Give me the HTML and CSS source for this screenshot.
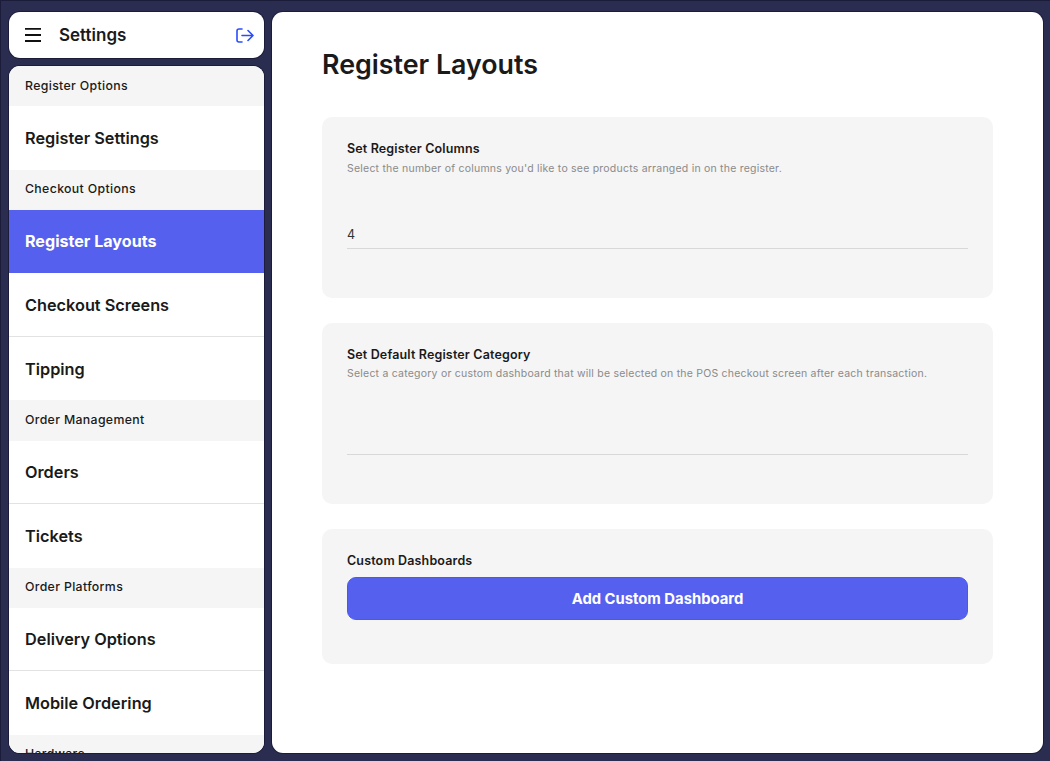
FILE: index.html
```html
<!DOCTYPE html>
<html lang="en">
<head>
<meta charset="utf-8">
<title>Settings</title>
<link rel="stylesheet" href="styles.css">
</head>
<body>
<div class="app">
  <aside class="sidebar">
    <header class="side-head">
      <svg class="menu-icon" width="18" height="16" viewBox="0 0 18 16" aria-hidden="true"><path d="M1 1.800h16M1 8h16M1 14h16" fill="none" stroke="#111" stroke-width="1.800"/></svg>
      <span class="side-title">Settings</span>
      <svg class="exit-icon" width="18" height="15" viewBox="0 0 18 15" aria-hidden="true"><path d="M6 1H3a2 2 0 0 0-2 2v9a2 2 0 0 0 2 2h3M6 7.500h11M12 2.500l5 5-5 5" fill="none" stroke="#2a4cff" stroke-width="1.600" stroke-linecap="round" stroke-linejoin="round"/></svg>
    </header>
    <nav class="menu">
      <div class="group">Register Options</div>
      <a class="item plain">Register Settings</a>
      <div class="group">Checkout Options</div>
      <a class="item plain active">Register Layouts</a>
      <a class="item">Checkout Screens</a>
      <a class="item plain">Tipping</a>
      <div class="group">Order Management</div>
      <a class="item">Orders</a>
      <a class="item plain">Tickets</a>
      <div class="group">Order Platforms</div>
      <a class="item">Delivery Options</a>
      <a class="item plain">Mobile Ordering</a>
      <div class="group">Hardware</div>
    </nav>
  </aside>
  <main class="content">
    <h1 class="page-title">Register Layouts</h1>
    <section class="card">
      <h2 class="card-title">Set Register Columns</h2>
      <p class="card-desc">Select the number of columns you'd like to see products arranged in on the register.</p>
      <div class="field">4</div>
    </section>
    <section class="card">
      <h2 class="card-title">Set Default Register Category</h2>
      <p class="card-desc">Select a category or custom dashboard that will be selected on the POS checkout screen after each transaction.</p>
      <div class="field"></div>
    </section>
    <section class="card card-last">
      <h2 class="card-title">Custom Dashboards</h2>
      <button class="add-btn" type="button">Add Custom Dashboard</button>
    </section>
  </main>
</div>
</body>
</html>
```
FILE: styles.css
```css
* { box-sizing: border-box; }
html, body { height: 100%; }
body {
  margin: 0;
  background: #2b2d50;
  font-family: Inter, "Liberation Sans", sans-serif;
  color: #1a1a1a;
  overflow: hidden;
}
.app {
  display: flex;
  gap: 8px;
  height: 761px;
  padding: 12px 7px 8px 9px;
  box-shadow: inset 1px 1px 0 #1b1c3a;
}
.sidebar {
  width: 255px;
  flex: none;
  display: flex;
  flex-direction: column;
  gap: 8px;
}
.side-head {
  height: 46px;
  flex: none;
  display: flex;
  align-items: center;
  background: #fff;
  border-radius: 11px;
  box-shadow: 0 0 0 1px #1b1c3a;
  padding: 0 10px 0 15px;
}
.menu-icon { flex: none; }
.side-title {
  margin-left: 17px;
  font-size: 17px;
  font-weight: 600;
  flex: 1;
}
.menu {
  flex: 1;
  min-height: 0;
  overflow: hidden;
  background: #fff;
  border-radius: 11px;
  box-shadow: 0 0 0 1px #1b1c3a;
}
.group {
  height: 40.200px;
  display: flex;
  align-items: center;
  padding: 0 0 2px 16px;
  background: #f5f5f5;
  font-size: 12.300px;
  font-weight: 500;
  letter-spacing: 0.35px;
}
.item {
  display: flex;
  align-items: center;
  height: 63.500px;
  padding-left: 16px;
  font-size: 16.300px;
  font-weight: 600;
  border-bottom: 1px solid #e2e2e2;
}
.item.plain { border-bottom: 0; }
.item.active {
  padding-bottom: 2px;
  background: #5561ee;
  color: #fff;
  font-weight: 700;
  font-size: 16.100px;
}
.content {
  flex: 1;
  min-width: 0;
  background: #fff;
  border-radius: 11px;
  box-shadow: 0 0 0 1px #1b1c3a;
  padding: 0 50px;
}
.page-title {
  margin: 34px 0 35px;
  font-size: 26.800px;
  line-height: 36px;
  font-weight: 600;
}
.card {
  width: 671px;
  height: 181px;
  margin-bottom: 25px;
  padding: 24px 25px 0;
  background: #f5f5f5;
  border-radius: 10px;
}
.card-last { height: 135px; }
.card-title {
  margin: 0;
  font-size: 12.500px;
  line-height: 15px;
  font-weight: 600;
  letter-spacing: 0.15px;
}
.card-desc {
  margin: 5px 0 0;
  font-size: 10.500px;
  line-height: 14px;
  letter-spacing: 0.22px;
  color: #8a8a8a;
}
.card:first-of-type .card-desc { line-height: 15px; }
.card:first-of-type .field { margin-top: 38px; }
.field {
  height: 35px;
  margin-top: 39px;
  padding-top: 13px;
  border-bottom: 1px solid #d8d8d8;
  font-size: 12.500px;
  line-height: 15px;
  color: #333;
}
.add-btn {
  display: block;
  width: 100%;
  height: 43px;
  margin-top: 9px;
  border: 1px solid #4b57f5;
  border-radius: 9px;
  background: #5561ee;
  color: #fff;
  font-family: inherit;
  font-size: 14.800px;
  font-weight: 700;
}
```
